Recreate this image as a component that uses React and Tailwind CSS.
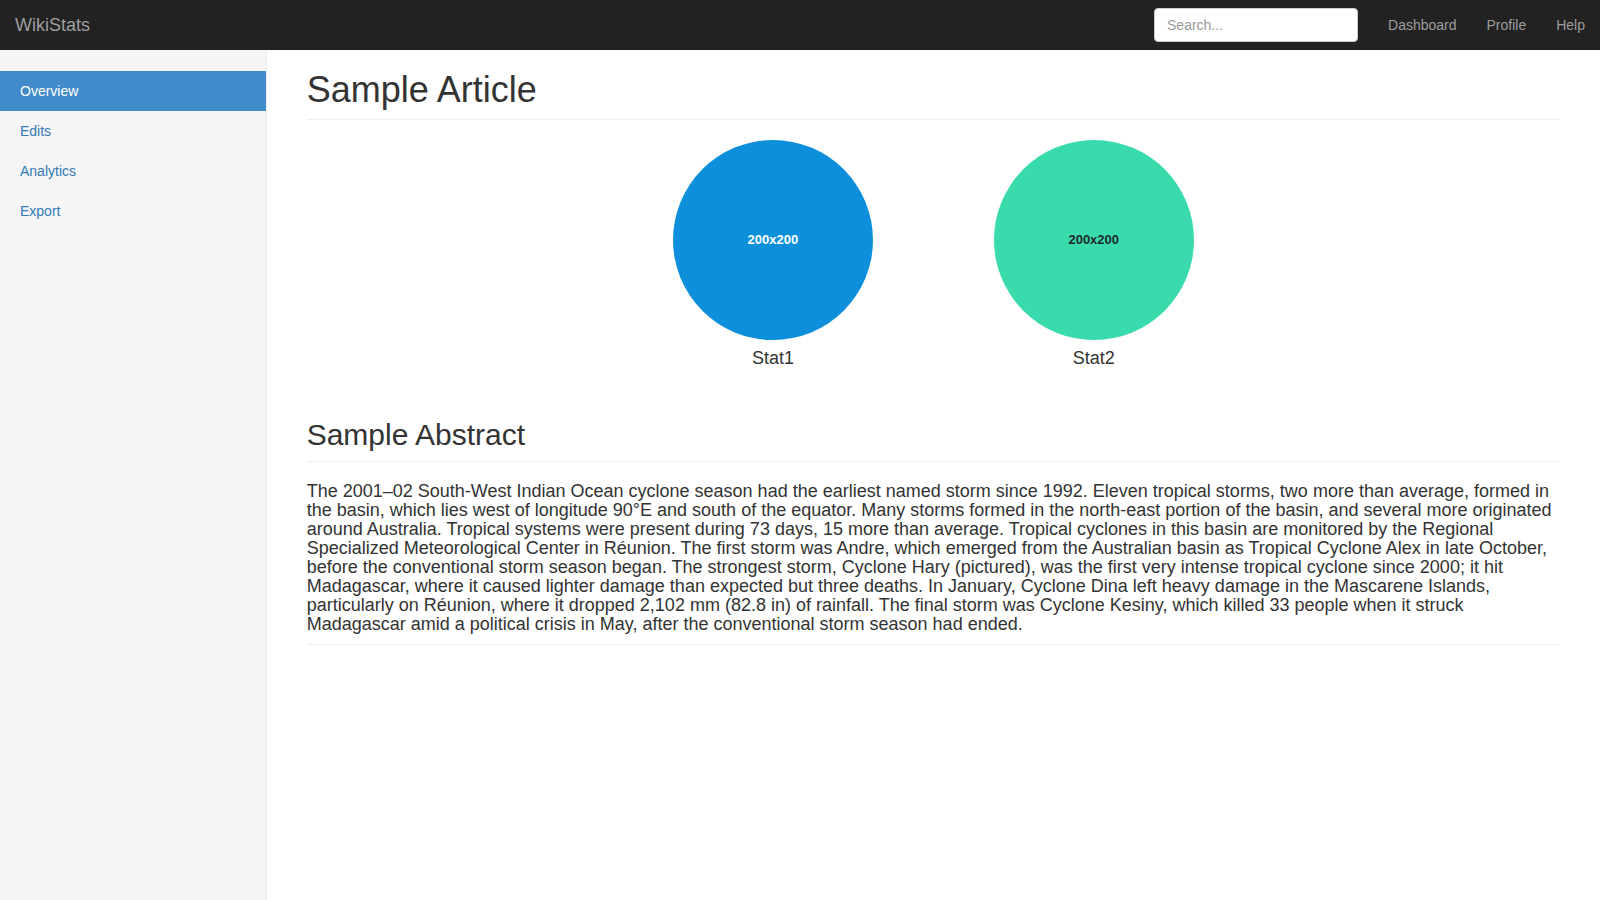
import React from 'react';

const navLinks = ['Dashboard', 'Profile', 'Help'];
const sideLinks = ['Overview', 'Edits', 'Analytics', 'Export'];

const abstract =
    'The 2001–02 South-West Indian Ocean cyclone season had the earliest named storm since 1992. Eleven tropical storms, two more than average, formed in the basin, which lies west of longitude 90°E and south of the equator. Many storms formed in the north-east portion of the basin, and several more originated around Australia. Tropical systems were present during 73 days, 15 more than average. Tropical cyclones in this basin are monitored by the Regional Specialized Meteorological Center in Réunion. The first storm was Andre, which emerged from the Australian basin as Tropical Cyclone Alex in late October, before the conventional storm season began. The strongest storm, Cyclone Hary (pictured), was the first very intense tropical cyclone since 2000; it hit Madagascar, where it caused lighter damage than expected but three deaths. In January, Cyclone Dina left heavy damage in the Mascarene Islands, particularly on Réunion, where it dropped 2,102 mm (82.8 in) of rainfall. The final storm was Cyclone Kesiny, which killed 33 people when it struck Madagascar amid a political crisis in May, after the conventional storm season had ended.';

function Placeholder({ label, bg, fg }) {
    return (
        <div className="px-[15px] mb-[20px] text-center">
            <div className={`mx-auto w-[200px] h-[200px] rounded-full flex items-center justify-center text-[13px] font-bold ${bg} ${fg}`}>
                200x200
            </div>
            <h4 className="mt-[9px] text-[18px] leading-[1.1] text-[#333]">{label}</h4>
        </div>
    );
}

export default function App() {
    return (
        <div className="h-screen flex flex-col bg-white text-[14px] text-[#333]" style={{ fontFamily: '"Liberation Sans", Arial, sans-serif' }}>
            {/* Navbar */}
            <header className="h-[50px] shrink-0 bg-[#222] flex items-center pl-[15px]">
                <span className="text-[18px] leading-[20px] text-[#9d9d9d]">WikiStats</span>
                <div className="ml-auto flex items-center">
                    <div className="px-[15px]">
                        <input
                            type="text"
                            placeholder="Search..."
                            className="w-[204px] h-[34px] px-3 rounded-[4px] bg-white border border-[#ccc] text-[14px] text-[#555] placeholder:text-[#999] outline-none"
                        />
                    </div>
                    {navLinks.map((l) => (
                        <a key={l} className="px-[15px] leading-[50px] text-[#9d9d9d]">
                            {l}
                        </a>
                    ))}
                </div>
            </header>

            <div className="flex flex-1 min-h-0">
                {/* Sidebar */}
                <aside className="w-1/6 shrink-0 bg-[#f5f5f5] border-r border-[#eee] pt-[21px]">
                    <ul>
                        {sideLinks.map((l, i) => (
                            <li key={l}>
                                <a
                                    className={`block px-5 py-[10px] leading-[20px] ${
                                        i === 0 ? 'bg-[#428bca] text-white' : 'text-[#337ab7]'
                                    }`}
                                >
                                    {l}
                                </a>
                            </li>
                        ))}
                    </ul>
                </aside>

                {/* Main */}
                <main className="flex-1 px-10 pt-5">
                    <h1 className="text-[36px] leading-[1.1] pb-[9px] mb-5 border-b border-[#eee]">Sample Article</h1>

                    <div className="grid grid-cols-4 -mx-[15px] mb-[30px]">
                        <div />
                        <Placeholder label="Stat1" bg="bg-[#0d8fdb]" fg="text-white" />
                        <Placeholder label="Stat2" bg="bg-[#39dbac]" fg="text-[#1e292c]" />
                        <div />
                    </div>

                    <h2 className="text-[30px] leading-[1.1] pb-[10px] border-b border-[#eee]">Sample Abstract</h2>
                    <div className="mt-5 pb-[10px] border-b border-[#eee]">
                        <p className="text-[18px] leading-[19px]">{abstract}</p>
                    </div>
                </main>
            </div>
        </div>
    );
}
